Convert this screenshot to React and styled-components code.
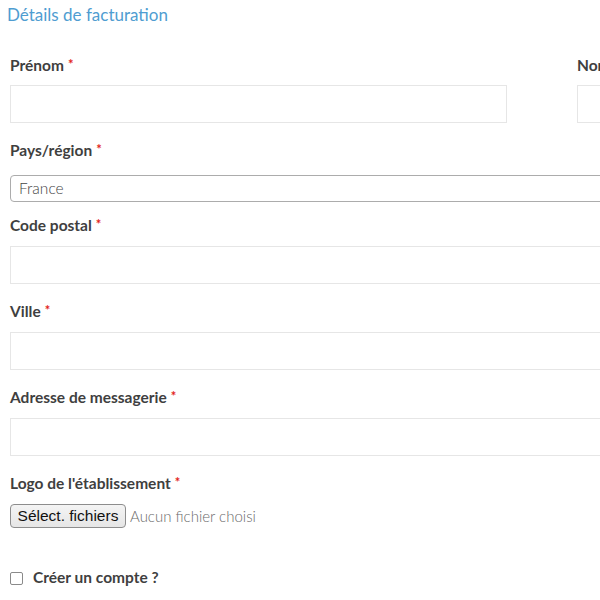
import React from "react";
import styled, { createGlobalStyle } from "styled-components";

const GlobalStyle = createGlobalStyle`
  body {
    margin: 0;
    background: #fff;
    font-family: Lato, "Open Sans", sans-serif;
    overflow: hidden;
  }
`;

const Form = styled.form`
  width: 1100px;
  padding: 5px 0 0 10px;
`;

const Title = styled.h3`
  margin: 0 0 28px -3px;
  font-size: 17px;
  line-height: 20px;
  font-weight: 400;
  color: #4f9dd1;
`;

const Row = styled.div`
  display: flex;
  gap: 70px;
`;

const Field = styled.div`
  width: ${(p) => (p.$half ? "497px" : "100%")};
  margin-bottom: ${(p) => p.$mb ?? 15}px;
`;

const Label = styled.label`
  display: block;
  font-size: 15.5px;
  line-height: 24px;
  font-weight: 700;
  color: #3f3f3f;
  margin-bottom: ${(p) => p.$mb ?? 8}px;
`;

const Star = styled.span`
  color: #e2231a;
  margin-left: 4px;
  font-size: 13px;
  vertical-align: top;
  position: relative;
  top: -1px;
`;

const TextInput = styled.input`
  display: block;
  box-sizing: border-box;
  width: 100%;
  height: 38px;
  border: 1px solid #e6e6e6;
  background: #fff;
  outline: none;
  font-family: inherit;
  font-size: 15px;
`;

const Select = styled.div`
  box-sizing: border-box;
  height: 27px;
  border: 1px solid #acacac;
  border-radius: 4px;
  padding: 0 8px;
  font-size: 15.5px;
  font-weight: 300;
  line-height: 25px;
  color: #444;
`;

const FileRow = styled.div`
  display: flex;
  align-items: center;
  gap: 4px;
  margin-bottom: 40px;
`;

const FileButton = styled.button`
  box-sizing: border-box;
  width: 116px;
  height: 24px;
  padding: 0;
  border: 1px solid #8d8d8d;
  border-radius: 4px;
  background: linear-gradient(#f4f4f4, #e6e6e6);
  font-family: "Liberation Sans", Arial, sans-serif;
  font-size: 15.5px;
  color: #111;
`;

const FileHint = styled.span`
  font-size: 15px;
  font-weight: 300;
  color: #6b6b6b;
`;

const CheckRow = styled.label`
  display: flex;
  align-items: center;
  gap: 10px;
  font-size: 15.5px;
  font-weight: 700;
  color: #3f3f3f;
`;

const Check = styled.input`
  appearance: none;
  box-sizing: border-box;
  width: 13px;
  height: 13px;
  margin: 2px 0 0 0;
  border: 1px solid #8a8a8a;
  border-radius: 2px;
  background: #fff;
`;

const Req = () => <Star>*</Star>;

const App = () => (
  <>
    <GlobalStyle />
    <Form>
      <Title>Détails de facturation</Title>
      <Row>
        <Field $half>
          <Label>
            Prénom
            <Req />
          </Label>
          <TextInput type="text" />
        </Field>
        <Field $half>
          <Label>
            Nom
            <Req />
          </Label>
          <TextInput type="text" />
        </Field>
      </Row>
      <Field $mb={11}>
        <Label $mb={13}>
          Pays/région
          <Req />
        </Label>
        <Select>France</Select>
      </Field>
      <Field>
        <Label $mb={9}>
          Code postal
          <Req />
        </Label>
        <TextInput type="text" />
      </Field>
      <Field>
        <Label $mb={9}>
          Ville
          <Req />
        </Label>
        <TextInput type="text" />
      </Field>
      <Field>
        <Label $mb={9}>
          Adresse de messagerie
          <Req />
        </Label>
        <TextInput type="email" />
      </Field>
      <Field $mb={0}>
        <Label $mb={9}>
          Logo de l'établissement
          <Req />
        </Label>
        <FileRow>
          <FileButton type="button">Sélect. fichiers</FileButton>
          <FileHint>Aucun fichier choisi</FileHint>
        </FileRow>
      </Field>
      <CheckRow>
        <Check type="checkbox" />
        Créer un compte ?
      </CheckRow>
    </Form>
  </>
);

export default App;
